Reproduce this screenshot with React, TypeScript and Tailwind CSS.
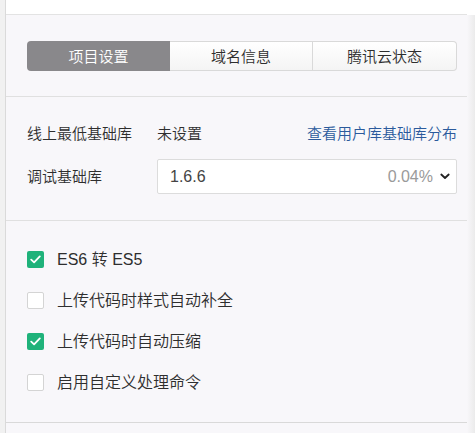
import React from "react";

const font = { fontFamily: '"Noto Sans CJK SC", "Noto Sans", sans-serif' };
const latin = { fontFamily: '"Liberation Sans", "Noto Sans CJK SC", sans-serif' };

function Check({ checked }: { checked: boolean }) {
  if (checked) {
    return (
      <div className="w-[17px] h-[17px] rounded-[2px] bg-[#1fb27a] flex items-center justify-center shrink-0">
        <svg width="11" height="9" viewBox="0 0 11 9" fill="none">
          <path d="M1.2 4.6 L4.1 7.3 L9.8 1.4" stroke="#ffffff" strokeWidth="1.8" strokeLinecap="round" strokeLinejoin="round" />
        </svg>
      </div>
    );
  }
  return <div className="w-[17px] h-[17px] rounded-[2px] bg-white border border-[#d4d4d4] shrink-0" />;
}

export default function App() {
  const items = [
    { label: "ES6 转 ES5", checked: true },
    { label: "上传代码时样式自动补全", checked: false },
    { label: "上传代码时自动压缩", checked: true },
    { label: "启用自定义处理命令", checked: false },
  ];
  return (
    <div className="w-[475px] h-[433px] flex overflow-hidden text-[#2e2e2e] font-[350]" style={font}>
      <div className="w-[6px] h-full bg-[#f1f1f1] border-r border-[#dadada] shrink-0" />
      <div className="flex-1 flex flex-col bg-[#f8f7fa]">
        <div className="h-[15px] bg-white border-b border-[#e3e3e3] shrink-0" />
        <div className="pt-[26px] pb-[25px] pl-[21px] pr-[10px] border-b border-[#e0e0e0]">
          <div className="flex h-[30px] text-[15px]">
            <div className="w-[143px] flex items-center justify-center rounded-l-[4px] bg-[#89888b] text-white">
              项目设置
            </div>
            <div className="w-[143px] flex items-center justify-center border-y border-r border-[#d9d9d9] bg-gradient-to-b from-white to-[#f4f4f4]">
              域名信息
            </div>
            <div className="w-[144px] flex items-center justify-center border-y border-r border-[#d9d9d9] rounded-r-[4px] bg-gradient-to-b from-white to-[#f4f4f4]">
              腾讯云状态
            </div>
          </div>
        </div>
        <div className="pt-[21px] pb-[26px] pl-[21px] pr-[10px] border-b border-[#e0e0e0] text-[15px]">
          <div className="flex h-[30px] items-center">
            <div className="w-[130px]">线上最低基础库</div>
            <div className="flex-1">未设置</div>
            <div className="text-[#2b5a9c]">查看用户库基础库分布</div>
          </div>
          <div className="flex h-[35px] items-center mt-[11px]">
            <div className="w-[130px]">调试基础库</div>
            <div className="flex-1 h-full bg-white border border-[#dcdcdc] rounded-[2px] flex items-center pl-[12px] pr-[6px]">
              <span className="flex-1 text-[#444] text-[16px]" style={latin}>1.6.6</span>
              <span className="text-[#9a9a9a] text-[16px]" style={latin}>0.04%</span>
              <svg className="ml-[7px]" width="10" height="7" viewBox="0 0 10 7" fill="none">
                <path d="M1.3 1.5 L5 5 L8.7 1.5" stroke="#222" strokeWidth="1.8" strokeLinecap="round" strokeLinejoin="round" />
              </svg>
            </div>
          </div>
        </div>
        <div className="pt-[18px] pb-[19px] pl-[21px] border-b border-[#d9d9d9] text-[16px]">
          {items.map((it) => (
            <div key={it.label} className="flex h-[41px] items-center gap-[13px]">
              <Check checked={it.checked} />
              <span style={latin}>{it.label}</span>
            </div>
          ))}
        </div>
        <div className="flex-1" />
      </div>
      <div className="w-[8px] h-full bg-gradient-to-r from-[#f8f7fa] to-[#ebebeb] shrink-0 flex flex-col">
        <div className="h-[15px] bg-white shrink-0" />
      </div>
    </div>
  );
}
